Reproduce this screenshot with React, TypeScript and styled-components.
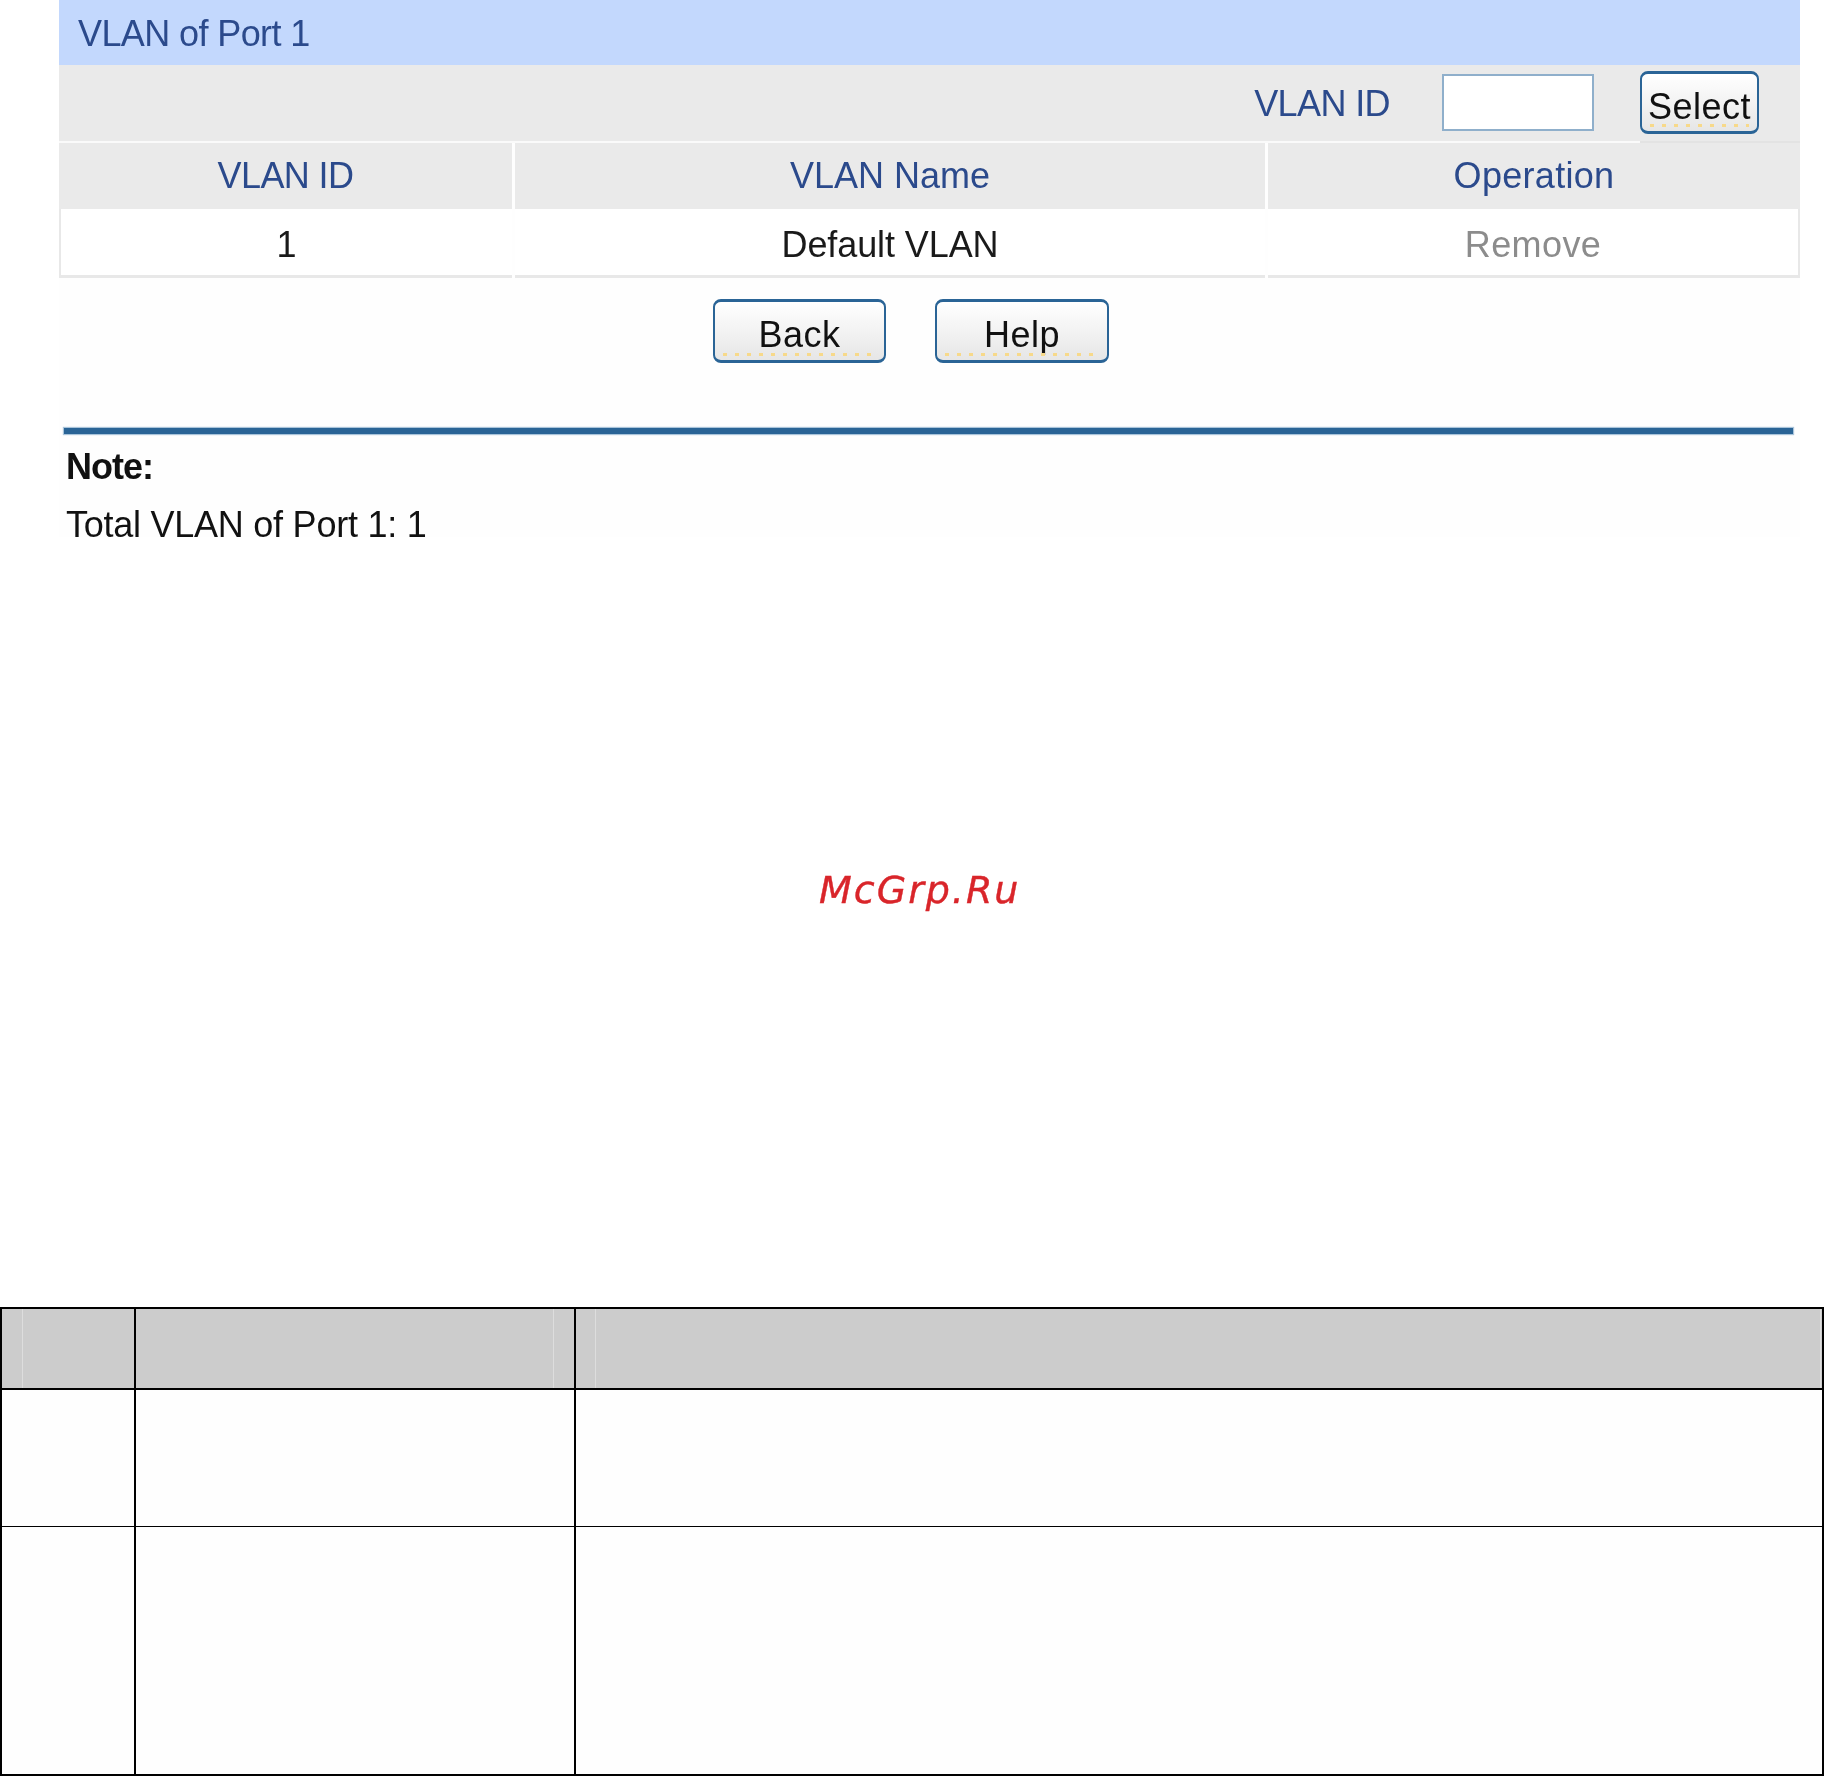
import React from "react";
import styled, { createGlobalStyle } from "styled-components";

const Global = createGlobalStyle`
  html, body { margin: 0; padding: 0; background: #ffffff; }
  body { font-family: "Liberation Sans", Arial, sans-serif; }
`;

const Page = styled.div`
  width: 1824px;
  height: 1776px;
  display: flex;
  flex-direction: column;
  overflow: hidden;
`;

const Panel = styled.section`
  margin-left: 59px;
  width: 1741px;
  height: 548px;
  flex: none;
  display: flex;
  flex-direction: column;
  background: linear-gradient(#fefefe 537px, #ffffff 537px);
  filter: blur(0.5px);
`;

const Title = styled.div`
  height: 65px;
  flex: none;
  background: #c3d8fd;
  color: #2b4a8c;
  font-size: 36px;
  line-height: 68px;
  letter-spacing: -0.6px;
  padding-left: 19px;
`;

const FilterBar = styled.div`
  height: 76px;
  flex: none;
  background: #eaeaea;
  display: flex;
  align-items: flex-start;
  justify-content: flex-end;
  padding-right: 41px;
`;

const FilterLabel = styled.label`
  color: #2b4a8c;
  font-size: 36px;
  line-height: 40px;
  letter-spacing: -0.6px;
  margin: 19px 52px 0 0;
`;

const IdInput = styled.input`
  box-sizing: border-box;
  width: 152px;
  height: 57px;
  margin: 9px 46px 0 0;
  border: 2px solid #8fafcb;
  background: #ffffff;
  padding: 0;
`;

const Button = styled.button<{ $w: number }>`
  position: relative;
  box-sizing: border-box;
  width: ${(p) => p.$w}px;
  height: 64px;
  padding: 7px 0 0;
  border: 2px solid #2a6496;
  border-top-width: 3px;
  border-bottom-width: 3px;
  border-radius: 8px;
  background: linear-gradient(#ffffff, #f4f4f4 45%, #e6e6e6);
  color: #111111;
  font-family: "Liberation Sans", Arial, sans-serif;
  font-size: 36px;
  letter-spacing: 0.5px;
  &::after {
    content: "";
    position: absolute;
    left: 8px;
    right: 8px;
    bottom: 4px;
    height: 3px;
    background: repeating-linear-gradient(90deg, #f7d98a 0 4px, transparent 4px 12px);
  }
`;

const SelectButton = styled(Button)`
  margin-top: 6px;
  height: 63px;
  padding-top: 9px;
`;

const Divider = styled.div`
  height: 2px;
  flex: none;
  background: linear-gradient(90deg, #fafafa 1581px, #e3e3e3 1581px);
`;

const TableGrid = styled.div`
  display: grid;
  grid-template-columns: 453px 750px 532px;
  column-gap: 3px;
  flex: none;
`;

const HeadCell = styled.div<{ $ls: number }>`
  height: 66px;
  background: #eaeaea;
  color: #2b4a8c;
  font-size: 36px;
  line-height: 66px;
  letter-spacing: ${(p) => p.$ls}px;
  text-align: center;
`;

const Cell = styled.div<{ $ls: number; $muted?: boolean; $left?: boolean; $right?: boolean }>`
  box-sizing: border-box;
  height: 69px;
  background: #ffffff;
  border-bottom: 3px solid #e8e8e8;
  border-left: ${(p) => (p.$left ? "2px solid #e8e8e8" : "0")};
  border-right: ${(p) => (p.$right ? "2px solid #e8e8e8" : "0")};
  color: ${(p) => (p.$muted ? "#8c8c8c" : "#1a1a1a")};
  font-size: 36px;
  line-height: 72px;
  letter-spacing: ${(p) => p.$ls}px;
  text-align: center;
`;

const Actions = styled.div`
  height: 150px;
  flex: none;
  box-sizing: border-box;
  padding-top: 21px;
  display: flex;
  gap: 49px;
  padding-left: 654px;
`;

const Rule = styled.hr`
  flex: none;
  margin: 0 7px 0 5px;
  height: 6px;
  border: 0;
  background: #2a6496;
  box-shadow: 0 0 1px 1px #a9c4da;
`;

const Note = styled.div`
  margin: 15px 0 0 7px;
  color: #111111;
  font-size: 36px;
  font-weight: 700;
  line-height: 36px;
  letter-spacing: -1px;
`;

const NoteText = styled.div`
  margin: 21px 0 0 7px;
  color: #111111;
  font-size: 36px;
  line-height: 38px;
  letter-spacing: -0.25px;
`;

const Middle = styled.div`
  height: 759px;
  flex: none;
  box-sizing: border-box;
  padding: 317px 0 0 819px;
`;

const Watermark = styled.div`
  font-family: "DejaVu Sans", sans-serif;
  font-style: italic;
  font-size: 38px;
  line-height: 50px;
  letter-spacing: 2px;
  color: #d9252a;
  -webkit-text-stroke: 0.4px #d9252a;
  filter: blur(0.4px);
`;

const DocTable = styled.div`
  box-sizing: border-box;
  height: 469px;
  border: 2px solid #000000;
  display: grid;
  grid-template-columns: 134px 440px 1fr;
  grid-template-rows: 81px 137px 1fr;
  background: #fefefe;
`;

const DocHead = styled.div<{ $marks: number[] }>`
  background-color: #cccccc;
  background-image: ${(p) => p.$marks.map(() => "linear-gradient(#dddddd, #dddddd)").join(", ")};
  background-size: ${(p) => p.$marks.map(() => "1px 100%").join(", ")};
  background-position: ${(p) => p.$marks.map((m) => `${m}px 0`).join(", ")};
  background-repeat: no-repeat;
  border-bottom: 2px solid #000000;
  border-right: 2px solid #000000;
  &:nth-child(3) { border-right: 0; }
`;

const DocCell = styled.div<{ $last?: boolean }>`
  border-right: 2px solid #000000;
  border-bottom: ${(p) => (p.$last ? "0" : "1px solid #000000")};
  &:nth-child(3n) { border-right: 0; }
`;

export default function App() {
  return (
    <Page>
      <Global />
      <Panel>
        <Title>VLAN of Port 1</Title>
        <FilterBar>
          <FilterLabel>VLAN ID</FilterLabel>
          <IdInput />
          <SelectButton $w={119}>Select</SelectButton>
        </FilterBar>
        <Divider />
        <TableGrid>
          <HeadCell $ls={-0.6}>VLAN ID</HeadCell>
          <HeadCell $ls={0}>VLAN Name</HeadCell>
          <HeadCell $ls={0.3}>Operation</HeadCell>
          <Cell $ls={-0.1} $left>1</Cell>
          <Cell $ls={-0.1}>Default VLAN</Cell>
          <Cell $ls={0.4} $muted $right>Remove</Cell>
        </TableGrid>
        <Actions>
          <Button $w={173}>Back</Button>
          <Button $w={174}>Help</Button>
        </Actions>
        <Rule />
        <Note>Note:</Note>
        <NoteText>Total VLAN of Port 1: 1</NoteText>
      </Panel>
      <Middle>
        <Watermark>McGrp.Ru</Watermark>
      </Middle>
      <DocTable>
        <DocHead $marks={[20]} />
        <DocHead $marks={[417]} />
        <DocHead $marks={[19, 1244]} />
        <DocCell />
        <DocCell />
        <DocCell />
        <DocCell $last />
        <DocCell $last />
        <DocCell $last />
      </DocTable>
    </Page>
  );
}
